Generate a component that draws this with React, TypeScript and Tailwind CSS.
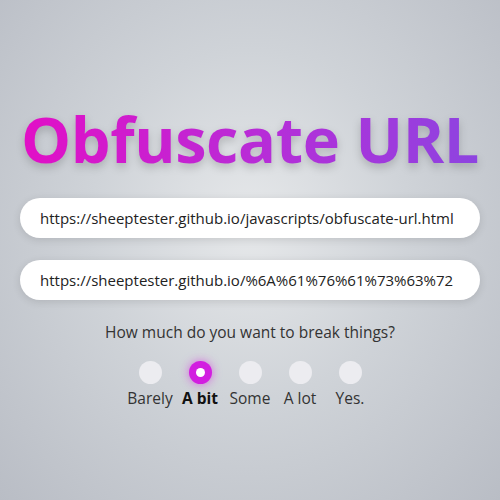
const levels = ['Barely', 'A bit', 'Some', 'A lot', 'Yes.']

export default function App() {
  return (
    <div
      className="flex h-[500px] w-[500px] flex-col items-center bg-[radial-gradient(ellipse_at_50%_45%,#e6e8ea_0%,#cfd3d8_45%,#b9bdc5_100%)] text-[#222]"
      style={{ fontFamily: '"Open Sans", "Noto Sans", sans-serif' }}
    >
      <h1 className="mt-[96px] bg-[linear-gradient(90deg,#e20fc6_0%,#b52ed8_55%,#8d44e0_100%)] bg-clip-text text-[63px] leading-[86px] font-bold tracking-[-0.4px] text-transparent [filter:drop-shadow(0_4px_4px_rgba(0,0,0,0.18))]">
        Obfuscate URL
      </h1>

      <div className="mt-[16px] flex w-[460px] flex-col gap-[22px]">
        <div className="flex h-[40px] items-center rounded-full bg-white px-5 text-[15px] shadow-[0_2px_8px_rgba(0,0,0,0.12)]">
          https://sheeptester.github.io/javascripts/obfuscate-url.html
        </div>
        <div className="flex h-[40px] items-center rounded-full bg-white px-5 text-[15px] shadow-[0_2px_8px_rgba(0,0,0,0.12)]">
          https://sheeptester.github.io/%6A%61%76%61%73%63%72
        </div>
      </div>

      <p className="mt-[21px] text-[15.5px] text-[#333]">How much do you want to break things?</p>

      <div className="mt-[17px] flex">
        {levels.map((label, i) => (
          <div key={label} className="flex w-[50px] flex-col items-center gap-[3px]">
            {i === 1 ? (
              <div className="flex h-[23px] w-[23px] items-center justify-center rounded-full bg-[#d21ee0] shadow-[0_0_10px_rgba(210,30,224,0.6)]">
                <div className="h-[9px] w-[9px] rounded-full bg-white" />
              </div>
            ) : (
              <div className="h-[23px] w-[23px] rounded-full bg-[#ececf0]" />
            )}
            <span className={`text-[15.5px] leading-[22px] ${i === 1 ? 'font-bold text-[#111]' : 'text-[#333]'}`}>
              {label}
            </span>
          </div>
        ))}
      </div>
    </div>
  )
}
